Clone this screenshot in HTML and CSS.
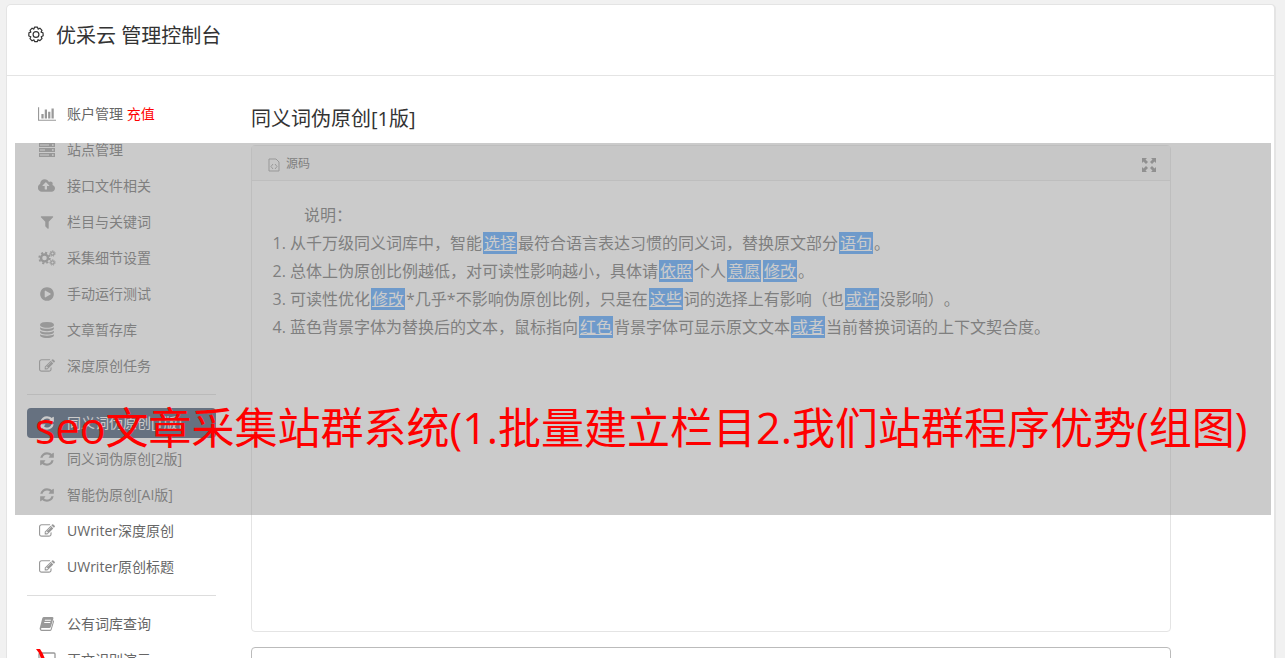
FILE: index.html
```
<!DOCTYPE html>
<html lang="zh-CN">
<head>
<meta charset="utf-8">
<meta name="viewport" content="width=device-width, initial-scale=1">
<title>优采云 管理控制台</title>
<link rel="stylesheet" href="styles.css">
</head>
<body>
<svg class="sprite" aria-hidden="true">
  <symbol id="chart" viewBox="0 0 2048 1792"><path d="M640 896v512h-256v-512h256zm384-512v1024h-256v-1024h256zm1024 1152v128h-2048v-1536h128v1408h1920zm-640-896v768h-256v-768h256zm384-384v1152h-256v-1152h256z"/></symbol>
  <symbol id="server" viewBox="0 0 18 16"><path fill-rule="evenodd" d="M1 1h16v4H1zM2 2.500v1h9v-1zM14 2.200v1.600h1.600V2.200zM1 6h16v4H1zM2 7.500v1h5v-1zM14 7.200v1.600h1.600V7.200zM1 11h16v4H1zM2 12.500v1h9v-1zM14 12.200v1.600h1.600v-1.600z"/></symbol>
  <symbol id="cloud" viewBox="0 0 1920 1792"><path d="M1216 864q0-14-9-23l-352-352q-9-9-23-9t-23 9l-351 351q-10 12-10 24 0 14 9 23t23 9h224v352q0 13 9.500 22.500t22.500 9.500h192q13 0 22.500-9.500t9.500-22.500v-352h224q13 0 22.500-9.500t9.500-22.500zm640 288q0 159-112.500 271.500t-271.500 112.500h-1088q-185 0-316.500-131.500t-131.500-316.500q0-130 70-240t188-165q-2-30-2-43 0-212 150-362t362-150q156 0 285.500 87t188.500 231q71-62 166-62 106 0 181 75t75 181q0 76-41 138 130 31 213.500 135.500t83.500 238.500z"/></symbol>
  <symbol id="filter" viewBox="0 0 1792 1792"><path d="M1595 295q17 41-14 70l-493 493v742q0 42-39 59-13 5-25 5-27 0-45-19l-256-256q-19-19-19-45v-486l-493-493q-31-29-14-70 17-39 59-39h1280q42 0 59 39z"/></symbol>
  <symbol id="cogs" viewBox="0 0 18 16"><g fill="none" stroke="currentColor"><circle cx="6.500" cy="8" r="3.500" stroke-width="2.400"/><circle cx="6.500" cy="8" r="5.300" stroke-width="1.800" stroke-dasharray="2.080 2.080"/><circle cx="14.500" cy="3.500" r="1.700" stroke-width="1.300"/><circle cx="14.500" cy="3.500" r="2.700" stroke-width="1" stroke-dasharray="1.210 1.210"/><circle cx="14.500" cy="12.500" r="1.700" stroke-width="1.300"/><circle cx="14.500" cy="12.500" r="2.700" stroke-width="1" stroke-dasharray="1.210 1.210"/></g></symbol>
  <symbol id="play" viewBox="0 0 1792 1792"><path d="M896 128q209 0 385.500 103t279.500 279.500 103 385.500-103 385.500-279.500 279.500-385.500 103-385.500-103-279.500-279.500-103-385.500 103-385.500 279.500-279.500 385.500-103zm384 823q32-18 32-55t-32-55l-544-320q-31-19-64-1-32 19-32 56v640q0 37 32 56 16 8 32 8 17 0 32-9z"/></symbol>
  <symbol id="database" viewBox="0 0 1792 1792"><path d="M896 768q237 0 443-43t325-127v170q0 69-103 128t-280 93.500-385 34.500-385-34.500-280-93.500-103-128v-170q119 84 325 127t443 43zm0 768q237 0 443-43t325-127v170q0 69-103 128t-280 93.500-385 34.500-385-34.500-280-93.500-103-128v-170q119 84 325 127t443 43zm0-384q237 0 443-43t325-127v170q0 69-103 128t-280 93.500-385 34.500-385-34.500-280-93.500-103-128v-170q119 84 325 127t443 43zm0-1152q208 0 385 34.500t280 93.500 103 128v128q0 69-103 128t-280 93.500-385 34.500-385-34.500-280-93.500-103-128v-128q0-69 103-128t280-93.500 385-34.500z"/></symbol>
  <symbol id="edit" viewBox="0 0 1792 1792"><path d="M888 1184l116-116-152-152-116 116v56h96v96h56zm440-720q-16-16-33 1l-350 350q-17 17-1 33t33-1l350-350q17-17 1-33zm80 594v190q0 119-84.500 203.500t-203.500 84.500h-832q-119 0-203.500-84.500t-84.500-203.500v-832q0-119 84.500-203.500t203.500-84.500h832q63 0 117 25 15 7 18 23 3 17-9 29l-49 49q-14 14-32 8-23-6-45-6h-832q-66 0-113 47t-47 113v832q0 66 47 113t113 47h832q66 0 113-47t47-113v-126q0-13 9-22l64-64q15-15 35-7t20 29zm-96-738l288 288-672 672h-288v-288zm444 132l-92 92-288-288 92-92q28-28 68-28t68 28l152 152q28 28 28 68t-28 68z"/></symbol>
  <symbol id="refresh" viewBox="0 0 1792 1792"><path d="M1639 1056q0 5-1 7-64 268-268 434.500t-478 166.500q-146 0-282.500-55t-243.500-157l-129 129q-19 19-45 19t-45-19-19-45v-448q0-26 19-45t45-19h448q26 0 45 19t19 45-19 45l-137 137q71 66 161 102t187 36q134 0 250-65t186-179q11-17 53-117 8-23 30-23h192q13 0 22.500 9.500t9.500 22.500zm25-800v448q0 26-19 45t-45 19h-448q-26 0-45-19t-19-45 19-45l138-138q-148-137-349-137-134 0-250 65t-186 179q-11 17-53 117-8 23-30 23h-199q-13 0-22.500-9.500t-9.500-22.500v-7q65-268 270-434.500t480-166.500q146 0 284 55.500t245 156.500l130-129q19-19 45-19t45 19 19 45z"/></symbol>
  <symbol id="book" viewBox="0 0 16 16"><path fill-rule="evenodd" d="M5 1h8.500q1.200.2.900 1.500L11.800 11q-.4 1-1.500 1H3q-1.200 0-1 1t1 .8h8.500l2.900-9.600q1 .4.600 1.500L12.500 14q-.4 1-1.500 1H2.500Q.6 14.700.6 12.500L3.300 2.300Q3.800 1 5 1zM6 3.800l-.3 1h6l.3-1zM5.400 6l-.3 1h6l.3-1z"/></symbol>
  <symbol id="screen" viewBox="0 0 18 16"><path fill="none" stroke="currentColor" stroke-width="1.300" d="M2 1h14q1 0 1 1v9q0 1-1 1H2q-1 0-1-1V2q0-1 1-1zM6 15h6M9 12v3"/></symbol>
</svg>

<div class="card">
  <header class="top">
    <svg class="gear" viewBox="0 0 18 18" aria-hidden="true"><path d="M7.500 1.200h3l.6 1.900 1.800-.9 2.100 2.100-.9 1.800 1.900.6.200 3.100-2 .9.800 1.800-2.100 2.100-1.900-.9-.6 1.900H7.600L7 13.900l-1.900.9L3 12.700l.8-1.900-2-.8.100-3.200 1.900-.7L3 4.300l2.100-2.100 1.800.9z"/><circle cx="9" cy="8.500" r="2.900"/></svg>
    <h1>优采云 管理控制台</h1>
  </header>
  <div class="body">
    <nav class="side">
      <ul>
        <li><a href="#"><svg><use href="#chart"/></svg><span>账户管理 <em>充值</em></span></a></li>
        <li><a href="#"><svg><use href="#server"/></svg>站点管理</a></li>
        <li><a href="#"><svg><use href="#cloud"/></svg>接口文件相关</a></li>
        <li><a href="#"><svg><use href="#filter"/></svg>栏目与关键词</a></li>
        <li><a href="#"><svg><use href="#cogs"/></svg>采集细节设置</a></li>
        <li><a href="#"><svg><use href="#play"/></svg>手动运行测试</a></li>
        <li><a href="#"><svg><use href="#database"/></svg>文章暂存库</a></li>
        <li><a href="#"><svg><use href="#edit"/></svg>深度原创任务</a></li>
      </ul>
      <ul>
        <li><a href="#" class="active" aria-current="page"><svg><use href="#refresh"/></svg>同义词伪原创[1版]</a></li>
        <li><a href="#"><svg><use href="#refresh"/></svg>同义词伪原创[2版]</a></li>
        <li><a href="#"><svg><use href="#refresh"/></svg>智能伪原创[AI版]</a></li>
        <li><a href="#"><svg><use href="#edit"/></svg>UWriter深度原创</a></li>
        <li><a href="#"><svg><use href="#edit"/></svg>UWriter原创标题</a></li>
      </ul>
      <ul>
        <li><a href="#"><svg><use href="#book"/></svg>公有词库查询</a></li>
        <li><a href="#"><svg><use href="#screen"/></svg>正文识别演示</a></li>
      </ul>
    </nav>
    <main>
      <h2>同义词伪原创[1版]</h2>
      <section class="editor">
        <div class="toolbar">
          <button type="button"><svg viewBox="0 0 12 14" width="12" height="14" aria-hidden="true"><path d="M1 1h7l3 3v9H1zM5 6L3 8.500 5 11M7 6l2 2.500L7 11"/></svg>源码</button>
          <button type="button" aria-label="全屏"><svg class="expand" viewBox="0 0 14 14" width="14" height="14" aria-hidden="true"><path d="M0 0h5L3.500 1.500 6 4 4 6 1.500 3.500 0 5zM14 0v5l-1.500-1.500L10 6 8 4l2.500-2.500L9 0zM0 14V9l1.500 1.500L4 8l2 2-2.500 2.500L5 14zM14 14H9l1.500-1.500L8 10l2-2 2.500 2.500L14 9z"/></svg></button>
        </div>
        <div class="text">
          <p>说明：</p>
          <ol>
            <li>从千万级同义词库中，智能<a href="#">选择</a>最符合语言表达习惯的同义词，替换原文部分<a href="#">语句</a>。</li>
            <li>总体上伪原创比例越低，对可读性影响越小，具体请<a href="#">依照</a>个人<a href="#">意愿</a><a href="#">修改</a>。</li>
            <li>可读性优化<a href="#">修改</a>*几乎*不影响伪原创比例，只是在<a href="#">这些</a>词的选择上有影响（也<a href="#">或许</a>没影响）。</li>
            <li>蓝色背景字体为替换后的文本，鼠标指向<a href="#">红色</a>背景字体可显示原文文本<a href="#">或者</a>当前替换词语的上下文契合度。</li>
          </ol>
        </div>
      </section>
      <textarea aria-label="结果"></textarea>
    </main>
  </div>
</div>
<div class="banner">seo文章采集站群系统(1.批量建立栏目2.我们站群程序优势(组图)</div>
<svg class="mark" viewBox="0 0 12 10" aria-hidden="true"><path d="M0 0h4q3 4 5 10H5Q4 4 0 0z"/></svg>
</body>
</html>
```
FILE: styles.css
```
* { box-sizing: border-box; }
body {
  margin: 0;
  height: 100vh;
  padding: 4px 9px 0 6px;
  overflow: hidden;
  position: relative;
  background: #f1f1f1;
  color: #666;
  font: 14px/30px "Open Sans", "Noto Sans CJK SC", sans-serif;
  text-spacing-trim: space-all;
}
.sprite { position: absolute; width: 0; height: 0; }
svg { fill: currentColor; flex: none; }
h1, h2, ul, ol, p { margin: 0; padding: 0; font-weight: inherit; }
ul { list-style: none; }
a { color: inherit; text-decoration: none; }

.card {
  background: #fff;
  border: 1px solid #e4e4e4;
  border-right-width: 2px;
  border-radius: 5px;
}
.top {
  display: flex;
  gap: 11px;
  padding: 16px 20px 24px;
  border-bottom: 1px solid #e4e4e4;
  color: #333;
}
.top h1, h2 { font-size: 20px; line-height: 30px; color: #333; }
.gear { width: 18px; height: 18px; margin-top: 5px; fill: none; stroke: #333; stroke-width: 1.2; stroke-linejoin: round; }
.body { display: flex; gap: 35px; padding: 23px 20px 0; }

.side { width: 189px; flex: none; }
.side ul + ul { border-top: 1px solid #ddd; margin-top: 13px; padding-top: 13px; }
.side ul { display: flex; flex-direction: column; gap: 6px; }
.side a { display: flex; align-items: center; gap: 11px; height: 30px; padding-left: 11px; border-radius: 4px; }
.side svg { width: 18px; height: 16px; color: #999; }
.side em { font-style: normal; color: #f00; }
.side .active { background: #354a69; color: #fff; }
.side .active svg { color: #fff; }

main { flex: 1; margin-right: 83px; padding-top: 5px; }
h2 { margin-bottom: 11px; }
.editor { border: 1px solid #e4e4e4; border-radius: 4px; height: 487px; margin-bottom: 15px; }
.toolbar {
  display: flex;
  justify-content: space-between;
  padding: 3px 14px 1px 16px;
  background: #f6f6f6;
  border-bottom: 1px solid #e4e4e4;
}
.toolbar button {
  display: flex;
  align-items: center;
  gap: 6px;
  padding: 0;
  border: 0;
  background: none;
  color: #666;
  font: inherit;
  font-size: 12px;
  line-height: 30px;
}
.toolbar svg { fill: none; stroke: #999; margin-top: 2px; }
.toolbar .expand { fill: #888; stroke: none; }
.text { padding: 20px 20px 0 38px; font-size: 16px; line-height: 28px; }
.text p { padding-left: 14px; }
.text a { background: #459dff; color: #fff; text-decoration: underline; padding: 0 1px; margin: 0 1px; }
textarea {
  display: block;
  width: 100%;
  height: 120px;
  border: 1px solid #bbb;
  border-radius: 4px;
  background: #fff;
  resize: none;
}

.banner {
  position: absolute;
  top: 143px;
  left: 15px;
  right: 14px;
  height: 372px;
  padding: 255px 0 0 20px;
  background: rgba(151, 151, 151, 0.5);
  color: #f00;
  font-size: 43px;
  line-height: 60px;
  white-space: nowrap;
}
.mark { position: absolute; left: 36px; top: 649px; width: 12px; height: 10px; fill: #f00; }
```
